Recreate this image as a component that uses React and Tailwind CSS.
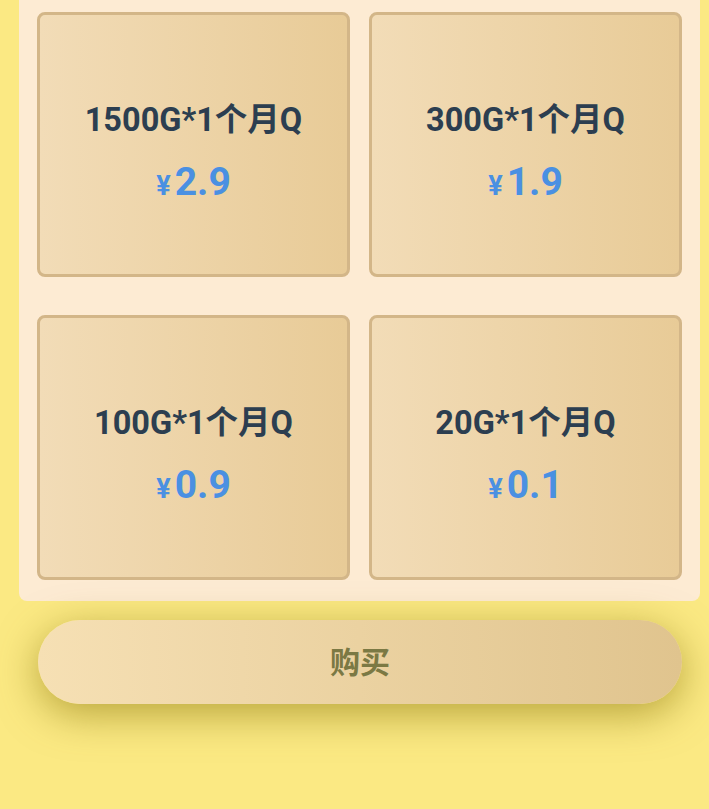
import React from "react";

const plans = [
  { name: "1500G*1个月Q", price: "2.9" },
  { name: "300G*1个月Q", price: "1.9" },
  { name: "100G*1个月Q", price: "0.9" },
  { name: "20G*1个月Q", price: "0.1" },
];

const PlanCard = ({ name, price }) => (
  <div className="h-[265px] rounded-lg border-[3px] border-[#d3b688] bg-gradient-to-r from-[#f2dcb7] to-[#e8cb97] flex flex-col items-center justify-center pt-[20px]">
    <div className="text-[32.5px] leading-[40px] font-bold text-[#2c3e50]">{name}</div>
    <div className="mt-[19px] leading-[46px] font-bold text-[#4a90e2] flex items-baseline">
      <span className="text-[27px] mr-[4px]">¥</span>
      <span className="text-[39px]">{price}</span>
    </div>
  </div>
);

export default function App() {
  return (
    <div
      className="min-h-[809px] bg-[#fbe983] pl-[19px] pr-[9px]"
      style={{ fontFamily: 'Roboto, "Noto Sans CJK SC", sans-serif' }}
    >
      <div className="bg-[#fdebd3] rounded-b-lg px-[18px] pt-[12px] pb-[21px]">
        <div className="grid grid-cols-2 gap-x-[19px] gap-y-[38px]">
          {plans.map((p) => (
            <PlanCard key={p.name} name={p.name} price={p.price} />
          ))}
        </div>
      </div>

      {/* buy button */}
      <button className="mt-[19px] ml-[19px] mr-[18px] w-[644px] h-[84px] rounded-full bg-gradient-to-r from-[#f6e0b4] to-[#e0c48e] shadow-[0_10px_40px_rgba(130,110,0,0.55)] text-[30px] font-bold text-[#7b7944] flex items-center justify-center">
        购买
      </button>
    </div>
  );
}
